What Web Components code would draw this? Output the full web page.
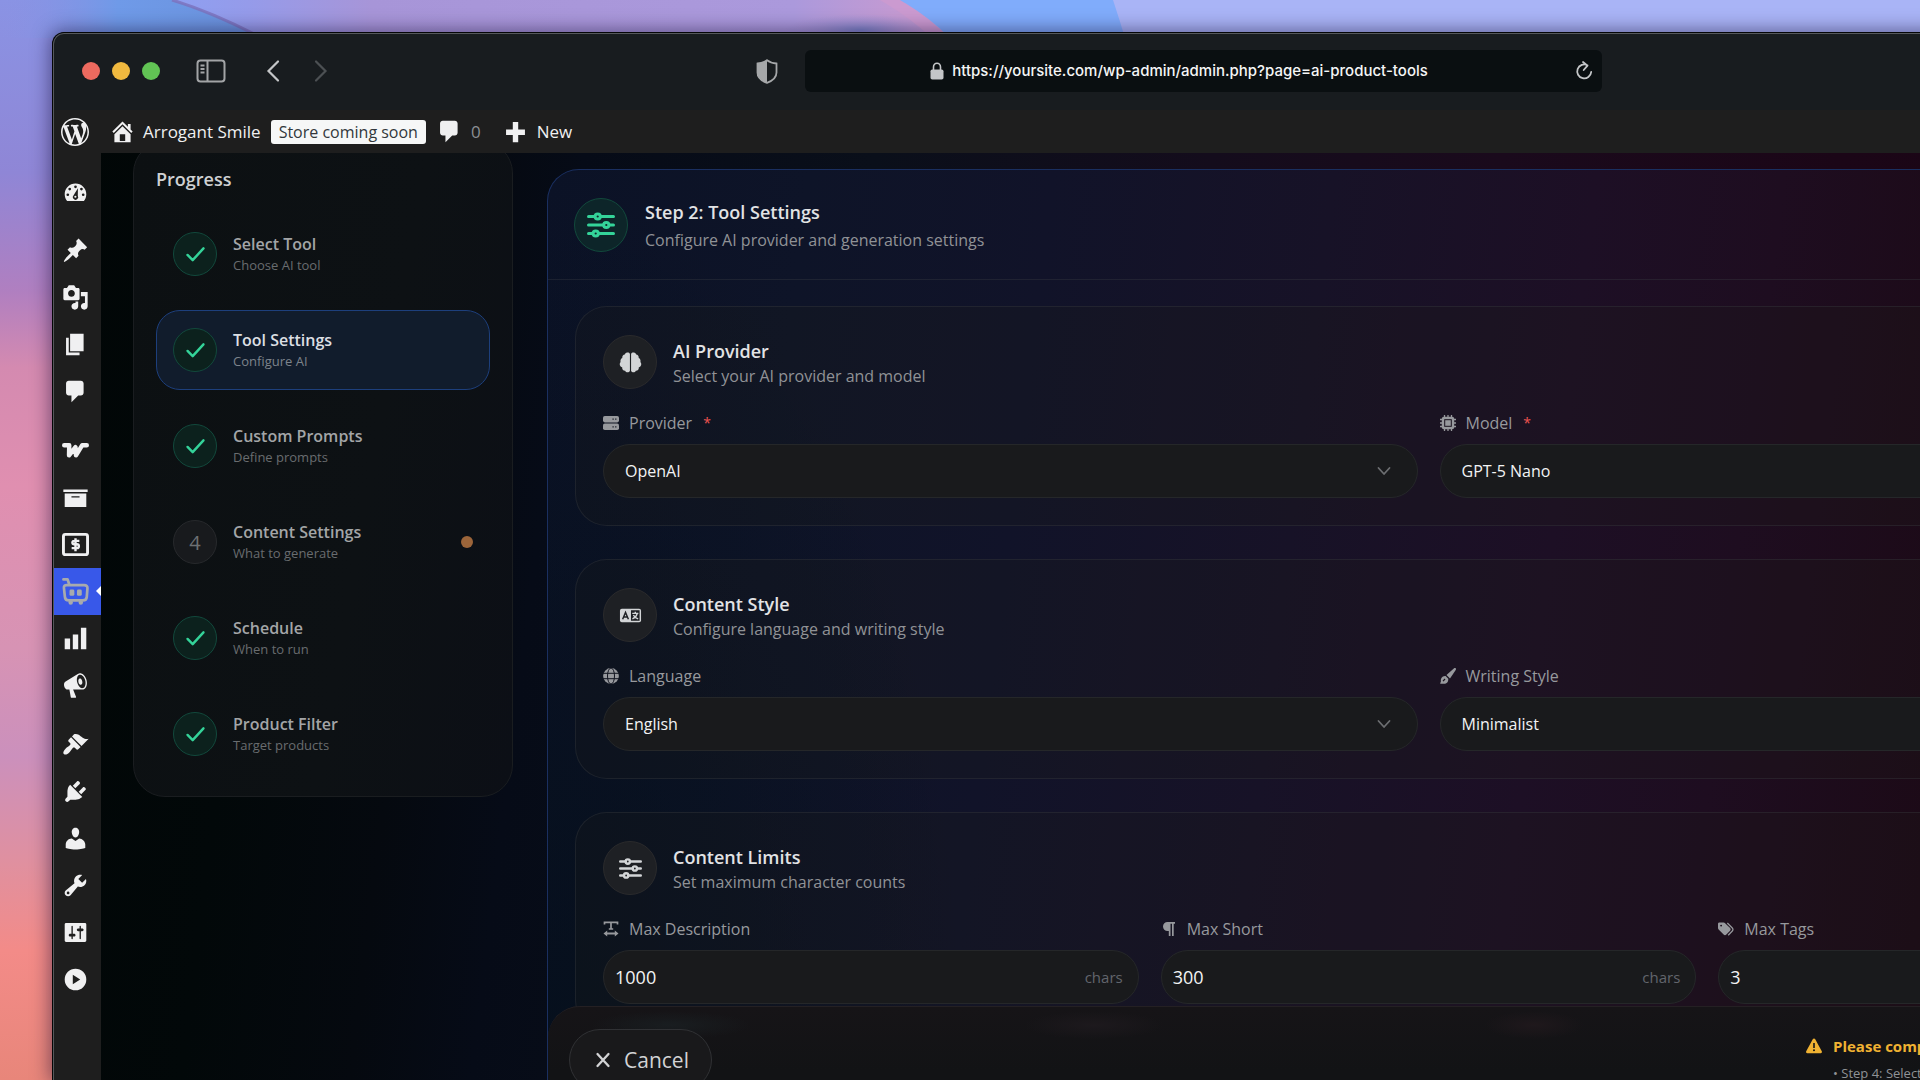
<!DOCTYPE html>
<html lang="en">
<head>
<meta charset="utf-8">
<title>AI Product Tools</title>
<style>
  html, body { margin: 0; height: 100%; }
  body { overflow: hidden; background: #a9b4f6; font-family: "Open Sans", "Noto Sans", sans-serif; }
</style>
</head>
<body>
<desk-top>
  <browser-window url="https://yoursite.com/wp-admin/admin.php?page=ai-product-tools">
    <admin-bar site="Arrogant Smile" badge="Store coming soon" comments="0"></admin-bar>
    <admin-shell>
      <admin-menu slot="menu"></admin-menu>
      <progress-card slot="aside" heading="Progress">
        <step-item heading="Select Tool" note="Choose AI tool" done></step-item>
        <step-item heading="Tool Settings" note="Configure AI" done active></step-item>
        <step-item heading="Custom Prompts" note="Define prompts" done></step-item>
        <step-item heading="Content Settings" note="What to generate" number="4" pending></step-item>
        <step-item heading="Schedule" note="When to run" done></step-item>
        <step-item heading="Product Filter" note="Target products" done></step-item>
      </progress-card>
      <step-panel heading="Step 2: Tool Settings" note="Configure AI provider and generation settings">
        <settings-section icon="brain" heading="AI Provider" note="Select your AI provider and model">
          <select-field icon="server" label="Provider" required value="OpenAI"></select-field>
          <select-field icon="chip" label="Model" required value="GPT-5 Nano"></select-field>
        </settings-section>
        <settings-section icon="language" heading="Content Style" note="Configure language and writing style">
          <select-field icon="globe" label="Language" value="English"></select-field>
          <select-field icon="brush" label="Writing Style" value="Minimalist"></select-field>
        </settings-section>
        <settings-section icon="sliders" heading="Content Limits" note="Set maximum character counts">
          <number-field icon="textwidth" label="Max Description" value="1000" unit="chars"></number-field>
          <number-field icon="paragraph" label="Max Short" value="300" unit="chars"></number-field>
          <number-field icon="tags" label="Max Tags" value="3"></number-field>
        </settings-section>
        <action-bar slot="actions"></action-bar>
      </step-panel>
    </admin-shell>
  </browser-window>
</desk-top>

<script>
const ICONS = {
  wordpress: ['0 0 20 20', '<path d="M20 10c0-5.51-4.49-10-10-10C4.48 0 0 4.49 0 10c0 5.52 4.48 10 10 10 5.51 0 10-4.48 10-10zM7.78 15.37L4.37 6.22c.55-.02 1.17-.08 1.17-.08.5-.06.44-1.13-.06-1.11 0 0-1.45.11-2.37.11-.18 0-.37 0-.58-.01C4.12 2.69 6.87 1.11 10 1.11c2.33 0 4.45.87 6.05 2.34-.68-.11-1.65.39-1.65 1.58 0 .74.45 1.36.9 2.1.35.61.55 1.36.55 2.46 0 1.49-1.4 5-1.4 5l-3.03-8.37c.54-.02.82-.17.82-.17.5-.05.44-1.25-.06-1.22 0 0-1.44.12-2.38.12-.87 0-2.33-.12-2.33-.12-.5-.03-.56 1.2-.06 1.22l.92.08 1.26 3.41zM17.41 10c.24-.64.74-1.87.43-4.25.7 1.29 1.05 2.71 1.05 4.25 0 3.29-1.73 6.24-4.4 7.78.97-2.59 1.94-5.2 2.92-7.78zM6.1 18.09C3.12 16.65 1.11 13.53 1.11 10c0-1.3.23-2.48.72-3.59C3.25 10.3 4.67 14.2 6.1 18.09zm4.03-6.63l2.58 6.98c-.86.29-1.76.45-2.71.45-.79 0-1.57-.11-2.29-.33.81-2.38 1.62-4.74 2.42-7.1z"/>'],
  home: ['0 0 20 20', '<path fill-rule="evenodd" d="M16 8.5l1.53 1.53-1.06 1.06L10 4.6l-6.47 6.49-1.06-1.06L10 2.5l4 4v-2h2v4zm-6-2.46l6 5.99V18H4v-5.97zM12 17v-5H8v5h4z"/>'],
  comment: ['0 0 20 20', '<path d="M5 2h9c1.1 0 2 .9 2 2v7c0 1.1-.9 2-2 2h-2l-5 5v-5H5c-1.1 0-2-.9-2-2V4c0-1.1.9-2 2-2z"/>'],
  plus: ['0 0 20 20', '<path d="M8 3h4v5.500h5v4h-5V18H8v-5.500H3v-4h5z"/>'],
  dashboard: ['0 0 20 20', '<path fill-rule="evenodd" d="M3.76 17h12.48c1.1-1.37 1.76-3.11 1.76-5 0-4.42-3.580-8-8-8s-8 3.580-8 8c0 1.890.66 3.630 1.760 5zM10 5.500a1 1 0 1 1 0 2 1 1 0 0 1 0-2zM5.700 7.200a1 1 0 1 1 0 2 1 1 0 0 1 0-2zM14.400 7.200a1 1 0 1 1 0 2 1 1 0 0 1 0-2zM4.300 11.400a1 1 0 1 1 0 2 1 1 0 0 1 0-2zM15.700 11.400a1 1 0 1 1 0 2 1 1 0 0 1 0-2zM11.800 7.600l-.1 5.500a2 2 0 1 1-3.100-.4z"/><circle cx="9.900" cy="13.900" r=".8"/>'],
  pin: ['0 0 20 20', '<path d="M10.44 3.02l1.82-1.82 6.36 6.35-1.83 1.82c-1.05-.68-2.48-.57-3.41.36l-.75.75c-.92.93-1.04 2.35-.35 3.41l-1.83 1.82-2.41-2.41-2.8 2.79c-.42.42-3.38 2.71-3.8 2.29s1.86-3.39 2.28-3.81l2.79-2.79L4.1 9.36l1.83-1.82c1.05.69 2.48.57 3.4-.36l.75-.75c.93-.92 1.05-2.35.36-3.41z"/>'],
  media: ['0 0 20 20', '<path d="M13 11V4c0-.55-.45-1-1-1h-1.67L9 1H5L3.67 3H2c-.55 0-1 .45-1 1v7c0 .55.45 1 1 1h10c.55 0 1-.45 1-1zM7 4.5c1.38 0 2.5 1.12 2.5 2.5S8.38 9.5 7 9.5 4.5 8.38 4.5 7 5.62 4.5 7 4.5zM14 6h5v10.5c0 1.38-1.12 2.5-2.5 2.5S14 17.88 14 16.5s1.12-2.5 2.5-2.5c.17 0 .34.02.5.05V9h-3V6zm-4 8.05V13h2v3.5c0 1.38-1.12 2.5-2.5 2.5S7 17.88 7 16.5 8.12 14 9.5 14c.17 0 .34.02.5.05z"/>'],
  pages: ['0 0 20 20', '<path d="M6 15V2h10v13H6zm-1 1h8v2H3V5h2v11z"/>'],
  woo: ['0 0 28 28', '<path d="M2.300 8.500h5.200L7.300 19l6.700-8.500.5 8.500 6.500-10.500h4.700" fill="none" stroke="currentColor" stroke-width="4.600" stroke-linejoin="round" stroke-linecap="round"/>'],
  archive: ['0 0 20 20', '<path fill-rule="evenodd" d="M19 4v2H1V4h18zM2 7h16v10H2V7zm11 3V9H7v1h6z"/>'],
  money: ['0 0 28 28', '<rect x="1.500" y="3.500" width="25" height="21" rx="2" fill="none" stroke="currentColor" stroke-width="3"/><path d="M18 10.200h-5.200c-1.500 0-2 .8-2 1.800s.7 1.800 2 1.800h2.700c1.300 0 2 .9 2 2s-.7 2-2 2H10M14 7.500V21" fill="none" stroke="currentColor" stroke-width="2.500"/>'],
  robot: ['0 0 28 28', '<g fill="none" stroke="currentColor" stroke-width="2.800" stroke-linejoin="round" stroke-linecap="round"><path d="M1.500 1.500h4.300l1.700 5"/><path d="M5 7.300h18c2.300 0 3.600 1.300 3.400 3.500l-.7 8.700c-.2 2.600-1.500 3.800-4 3.800H7c-2.500 0-3.800-1.200-4-3.800L2 10.300c-.2-2 .8-3 3-3z"/></g><rect x="7.800" y="12" width="5" height="6.500" rx="1.500"/><rect x="15.500" y="12" width="5" height="6.500" rx="1.500"/><circle cx="9" cy="25.500" r="2.300"/><circle cx="19.500" cy="25.500" r="2.300"/>'],
  bars: ['0 0 20 20', '<path d="M18 18V2h-4v16h4zm-6 0V7H8v11h4zm-6 0v-8H2v8h4z"/>'],
  megaphone: ['0 0 20 20', '<path fill-rule="evenodd" d="M18.15 5.94c.46 1.62.38 3.22-.02 4.48-.42 1.28-1.26 2.18-2.3 2.48-.16.06-.26.06-.4.06-.06.02-.12.02-.18.02-.06.02-.14.02-.22.02h-6.8l2.22 5.5c.02.14-.06.26-.14.34-.08.1-.24.16-.34.16H6.95c-.1 0-.26-.06-.34-.16-.08-.08-.16-.2-.14-.34l-1-5.5H4.25l-.02-.02c-.5.06-1.08-.18-1.54-.62s-.88-1.08-1.06-1.88c-.24-.8-.2-1.56-.02-2.2.18-.62.58-1.08 1.06-1.3l.02-.02 9-5.4c.1-.06.18-.1.24-.16.06-.04.14-.08.24-.12.16-.08.28-.12.5-.18 1.04-.3 2.24.1 3.22.98s1.84 2.24 2.26 3.86zm-2.58 5.98h-.02c.4-.1.74-.34 1.04-.7.58-.7.86-1.76.86-3.04 0-.64-.1-1.3-.28-1.98-.34-1.36-1.02-2.5-1.78-3.24s-1.68-1.1-2.46-.88c-.82.22-1.4.96-1.7 2-.32 1.04-.28 2.36.06 3.72.38 1.36 1 2.5 1.8 3.24.78.74 1.62 1.1 2.48.88zm-2.54-7.08c.22-.04.42-.02.62.04.38.16.76.48 1.02 1s.42 1.2.42 1.78c0 .3-.04.56-.12.8-.18.48-.44.84-.86.94-.34.1-.8-.06-1.14-.4s-.64-.86-.78-1.5c-.18-.62-.12-1.24.02-1.72s.48-.84.82-.94z"/>'],
  paint: ['0 0 20 20', '<path d="M14.48 11.06L7.41 3.99l1.5-1.5c.5-.56 2.3-.47 3.51.32 1.21.8 1.43 1.28 2.91 2.1 1.18.64 2.45 1.26 4.45.85zm-.71.71L6.7 4.7 4.93 6.47c-.39.39-.39 1.02 0 1.41l1.06 1.06c.39.39.39 1.03 0 1.42-.6.6-1.43 1.11-2.21 1.69-.35.26-.7.53-1.01.84C1.43 14.23.4 16.08 1.4 17.07c.99 1 2.84-.03 4.18-1.36.31-.31.58-.66.85-1.02.57-.78 1.08-1.61 1.69-2.21.39-.39 1.02-.39 1.41 0l1.06 1.06c.39.39 1.02.39 1.41 0z"/>'],
  plug: ['0 0 20 20', '<path d="M13.11 4.36L9.87 7.6 8 5.73l3.24-3.24c.35-.34 1.05-.2 1.56.32.52.51.66 1.21.31 1.55zm-8 1.77l.91-1.12 9.01 9.01-1.19.84c-.71.71-2.63 1.16-3.82 1.16H6.14L4.9 17.26c-.59.59-1.54.59-2.12 0-.59-.58-.59-1.53 0-2.12l1.24-1.24v-3.88c0-1.13.4-3.19 1.09-3.89zm7.26 3.97l3.24-3.24c.34-.35 1.04-.21 1.55.31.52.51.66 1.21.31 1.55l-3.24 3.25z"/>'],
  user: ['0 0 20 20', '<path d="M10 9.25c-2.27 0-2.73-3.44-2.73-3.44C7 4.02 7.82 2 9.97 2c2.16 0 2.98 2.02 2.71 3.81 0 0-.41 3.44-2.68 3.44zm0 2.57L12.72 10c2.39 0 4.52 2.33 4.52 4.53v2.49s-3.65 1.13-7.24 1.13c-3.65 0-7.24-1.13-7.24-1.13v-2.49c0-2.25 1.94-4.48 4.47-4.48z"/>'],
  wrench: ['0 0 20 20', '<path fill-rule="evenodd" d="M16.68 9.77c-1.34 1.34-3.3 1.67-4.95.99l-5.41 6.52c-.99.99-2.59.99-3.58 0s-.99-2.59 0-3.57l6.52-5.42c-.68-1.65-.35-3.61.99-4.95 1.28-1.28 3.12-1.62 4.72-1.06l-2.89 2.89 2.82 2.82 2.86-2.87c.53 1.58.18 3.39-1.08 4.65zM3.81 16.21c.4.39 1.04.39 1.43 0 .4-.4.4-1.04 0-1.43-.39-.4-1.03-.4-1.43 0-.39.39-.39 1.03 0 1.43z"/>'],
  settings: ['0 0 20 20', '<path fill-rule="evenodd" d="M18 16V4c0-.55-.45-1-1-1H3c-.55 0-1 .45-1 1v12c0 .55.45 1 1 1h14c.55 0 1-.45 1-1zM8 11h1c.55 0 1 .45 1 1s-.45 1-1 1H8v1.5c0 .28-.22.5-.5.5s-.5-.22-.5-.5V13H6c-.55 0-1-.45-1-1s.45-1 1-1h1V5.5c0-.28.22-.5.5-.5s.5.22.5.5V11zm5-2h-1c-.55 0-1-.45-1-1s.45-1 1-1h1V5.5c0-.28.22-.5.5-.5s.5.22.5.5V7h1c.55 0 1 .45 1 1s-.45 1-1 1h-1v5.5c0 .28-.22.5-.5.5s-.5-.22-.5-.5V9z"/>'],
  play: ['0 0 20 20', '<path fill-rule="evenodd" d="M10 2a8 8 0 1 1 0 16 8 8 0 0 1 0-16zM8 6.500v7l5.500-3.500z"/>'],
  sidebar: ['0 0 30 24', '<g fill="none" stroke="currentColor" stroke-width="2"><rect x="1.500" y="1.500" width="27" height="21" rx="3"/><path d="M11.500 1.500v21M4.500 6.500h4M4.500 10h4M4.500 13.500h4"/></g>'],
  back: ['0 0 14 22', '<path d="M12 1.500 2.500 11 12 20.500" fill="none" stroke="currentColor" stroke-width="2.200" stroke-linecap="round"/>'],
  forward: ['0 0 14 22', '<path d="M2 1.500 11.500 11 2 20.500" fill="none" stroke="currentColor" stroke-width="2.200" stroke-linecap="round"/>'],
  shield: ['0 0 22 25', '<path d="M11 1.200c2.500 2 6 3 9.500 3.300v9c0 5-4.500 8.500-9.500 10.300C6 22 1.500 18.500 1.500 13.500v-9C5 4.200 8.500 3.200 11 1.200z" fill="none" stroke="currentColor" stroke-width="1.800"/><path d="M11 1.200v22.600C6 22 1.500 18.500 1.500 13.500v-9C5 4.200 8.500 3.200 11 1.200z"/>'],
  lock: ['0 0 14 18', '<rect x=".5" y="7.500" width="13" height="10" rx="1.800"/><path d="M3.500 8V5a3.500 3.800 0 0 1 7 0v3" fill="none" stroke="currentColor" stroke-width="1.600"/>'],
  reload: ['0 0 18 20', '<path d="M12.500 4.200A7 7 0 1 0 16.200 11M8 1l4.500 3.600L8.700 9" fill="none" stroke="currentColor" stroke-width="1.800" stroke-linecap="round" stroke-linejoin="round"/>'],
  check: ['0 0 20 16', '<path d="M1.500 8.500 7 14 18.500 1.500" fill="none" stroke="currentColor" stroke-width="2.600" stroke-linecap="round" stroke-linejoin="round"/>'],
  sliders: ['0 0 28 26', '<g fill="none" stroke="currentColor" stroke-width="3" stroke-linecap="round"><path d="M1.500 4.500h6M14 4.500h12.500M1.500 13h14.500M22.500 13h4M1.500 21.500h4M12 21.500h14.500"/><circle cx="10.700" cy="4.500" r="2.600"/><circle cx="19.300" cy="13" r="2.600"/><circle cx="8.700" cy="21.500" r="2.600"/></g>'],
  brain: ['0 0 24 24', '<path d="M11.400 3v17.500c-.8 2.200-4 2.400-5 .1-2 .1-3.400-1.600-3-3.500C.6 16 0 13.300 1.600 11.400c-.4-2 .4-3.500 1.800-4.100C3.200 5.200 4.600 3.900 6 3.700 7 1.300 10.500 1 11.400 3zM12.600 3v17.500c.8 2.200 4 2.400 5 .1 2 .1 3.400-1.600 3-3.500 2.800-1.100 3.400-3.800 1.800-5.700.4-2-.4-3.500-1.800-4.100.2-2.100-1.200-3.400-2.600-3.600C17 1.300 13.500 1 12.600 3z"/>'],
  language: ['0 0 24 24', '<rect x="1" y="5" width="22" height="14" rx="2"/><rect x="12.500" y="6.500" width="9" height="11" fill="#1e2024"/><g fill="none" stroke="#1e2024" stroke-width="1.500"><path d="M3.800 16 6.800 8.800 9.800 16M5 13.500h3.600"/><path stroke="currentColor" d="M13.800 9.800h6.400M17 8v1.800M19 10c-.6 2.600-2.200 4.300-5 5.500M15 11.500c.8 1.800 2.400 3.200 5 4"/></g>'],
  server: ['0 0 16 16', '<rect y="1" width="16" height="6.400" rx="1.800"/><rect y="8.600" width="16" height="6.400" rx="1.800"/><path d="M9.500 4.200h1.200M12.200 4.200h1.200M9.500 11.800h1.200M12.200 11.800h1.200" stroke="#11151f" stroke-width="1.300"/>'],
  chip: ['0 0 16 16', '<path d="M4.500 0v16M8 0v16M11.500 0v16M0 4.500h16M0 8h16M0 11.500h16" stroke="currentColor" stroke-width="1.300"/><rect x="1.800" y="1.800" width="12.400" height="12.400" rx="2"/><rect x="4.700" y="4.700" width="6.600" height="6.600" fill="none" stroke="#1a121f" stroke-width="1"/>'],
  globe: ['0 0 16 16', '<circle cx="8" cy="8" r="7.900"/><g fill="none" stroke="#11141f" stroke-width="1"><ellipse cx="8" cy="8" rx="3.500" ry="8"/><path d="M0 5.300h16M0 10.700h16"/></g>'],
  brush: ['0 0 16 16', '<path d="M15.700.3c.5.500.4 1.200 0 1.800L10 10.500 6.500 7 13.800.5c.6-.5 1.400-.6 1.900-.2zM5.600 8l2.700 2.700c.2 3-1.500 5-4.300 5H.8c-.5 0-.8-.5-.4-1C1.500 13.600.4 12.500 1 11c.7-2 2.400-3.200 4.600-3z"/><path d="M3 13.200 5 11" stroke="#1b121d" stroke-width="1.200"/>'],
  textwidth: ['0 0 16 16', '<path d="M1.500 3.500V1.300h13v2.200M8 1.300v6.500M5.800 8h4.400" fill="none" stroke="currentColor" stroke-width="1.700"/><path d="M.5 12.500 4.200 9.500v2h7.600v-2l3.700 3-3.700 3v-2H4.200v2z"/>'],
  paragraph: ['0 0 16 16', '<path d="M6.500 1H14v1.800h-1.300V15H11V2.800H9.500V15H7.800v-5H6.500a4.500 4.500 0 0 1 0-9z"/>'],
  tags: ['0 0 18 16', '<path fill-rule="evenodd" d="M0 2.200v4.700c0 .6.200 1.200.7 1.600l5.600 5.800c.9.900 2.200.9 3.100 0l4.200-4.300c.9-.9.900-2.200 0-3.100L8 1.400C7.600.900 7 .7 6.400.7H1.500C.7.700 0 1.400 0 2.200zM3.500 5.300a1.100 1.100 0 1 1 0-2.200 1.100 1.100 0 0 1 0 2.200z"/><path d="M10.500 1.200l5.600 5.700c1 1 1 2.300 0 3.300l-4.600 4.800" fill="none" stroke="currentColor" stroke-width="1.400"/>'],
  chevron: ['0 0 14 10', '<path d="M1.500 2 7 8l5.500-6" fill="none" stroke="currentColor" stroke-width="1.800" stroke-linecap="round" stroke-linejoin="round"/>'],
  close: ['0 0 14 14', '<path d="M1.500 1 12.500 13M12.500 1 1.500 13" stroke="currentColor" stroke-width="2.300" stroke-linecap="round"/>'],
  warning: ['0 0 16 16', '<path fill-rule="evenodd" d="M8 .5c.5 0 .9.200 1.100.6l6.700 12.200c.5.900-.1 1.900-1.100 1.900H1.300c-1 0-1.600-1-1.100-1.900L6.900 1.100C7.100.700 7.500.5 8 .5zM7.200 5v5h1.600V5zM8 11.300a1 1 0 1 0 0 2 1 1 0 0 0 0-2z"/>']
};

class Base extends HTMLElement {
  connectedCallback() {
    if (this.shadowRoot) return;
    const t = document.createElement('template');
    t.innerHTML = this.view();
    this.attachShadow({ mode: 'open' }).append(t.content.cloneNode(true));
  }
  a(name) { return this.getAttribute(name) || ''; }
}

customElements.define('ui-icon', class extends Base {
  view() {
    const [box, art] = ICONS[this.a('name')];
    return `<style>:host{display:inline-flex;width:16px;height:16px;flex:none}svg{width:100%;height:100%;overflow:visible}</style>
      <svg viewBox="${box}" fill="currentColor" aria-hidden="true">${art}</svg>`;
  }
});

customElements.define('desk-top', class extends Base {
  view() {
    return `<style>
      :host{display:block;position:relative;height:100vh;overflow:hidden}
      .paper{position:absolute;inset:0;width:100%;height:100%}
      .body{position:relative;height:100%;box-sizing:border-box;padding:32px 0 0 52px}
    </style>
    <svg class="paper" viewBox="0 0 1920 1080" preserveAspectRatio="none" aria-hidden="true">
      <defs>
        <linearGradient id="side" x1="0" y1="0" x2="0" y2="1">
          <stop offset="0" stop-color="#8a93e4"/><stop offset=".16" stop-color="#8f86d6"/>
          <stop offset=".27" stop-color="#b07fc0"/><stop offset=".34" stop-color="#d48ab0"/>
          <stop offset=".45" stop-color="#e08fb0"/><stop offset=".6" stop-color="#d793b4"/>
          <stop offset=".7" stop-color="#cb90bc"/><stop offset=".8" stop-color="#e0909f"/>
          <stop offset=".88" stop-color="#f38b88"/><stop offset="1" stop-color="#e8867a"/>
        </linearGradient>
        <linearGradient id="top" x1="160" x2="1920" y1="0" y2="0" gradientUnits="userSpaceOnUse">
          <stop offset="0" stop-color="#8da0f2"/><stop offset=".05" stop-color="#959bea"/>
          <stop offset=".12" stop-color="#a795d8"/><stop offset=".36" stop-color="#ab99dc"/>
          <stop offset=".42" stop-color="#c49ad2"/>
        </linearGradient>
        <linearGradient id="blue" x1="0" x2="1" y1="0" y2="0">
          <stop offset="0" stop-color="#8a93e4" stop-opacity="0"/><stop offset=".45" stop-color="#6f9ae8"/><stop offset="1" stop-color="#6a92dc"/>
        </linearGradient>
        <radialGradient id="dusk"><stop offset="0" stop-color="#7f86cc"/><stop offset="1" stop-color="#9a90d2" stop-opacity="0"/></radialGradient>
      </defs>
      <rect width="1920" height="1080" fill="#a9b4f6"/>
      <rect width="300" height="1080" fill="url(#side)"/>
      <path d="M170 0H910L950 40H260z" fill="url(#top)"/>
      <path d="M0 0h172q40 12 90 38H0z" fill="url(#blue)"/>
      <path d="M172 0q40 12 90 38" fill="none" stroke="#7c70bc" stroke-width="3" opacity=".8"/>
      <ellipse cx="860" cy="30" rx="75" ry="16" fill="url(#dusk)"/>
      <path d="M880 0h20q28 16 50 38h-18q-24-22-52-38z" fill="#cb9ad0"/>
      <path d="M900 0h213q6 18 12 38H950q-22-22-50-38z" fill="#80acfb"/>
    </svg>
    <div class="body"><slot></slot></div>`;
  }
});

customElements.define('browser-window', class extends Base {
  view() {
    return `<style>
      :host{display:flex;flex-direction:column;height:100%;margin-right:-434px;box-sizing:border-box;overflow:hidden;
        border:1px solid #050607;border-bottom:0;border-radius:12px 12px 0 0;background:#181c1f;
        box-shadow:0 0 18px 2px rgba(20,10,50,.5)}
      .frame{display:flex;flex-direction:column;flex:1;min-height:0;border:1px solid #55585b;border-bottom:0;border-right:0;border-radius:11px 11px 0 0;overflow:hidden}
      header{display:grid;grid-template-columns:1fr 797px 1fr;align-items:center;height:76px;flex:none;color:#c4c6c8;padding-bottom:2px;box-sizing:border-box}
      .left{display:flex;align-items:center;padding-left:28px}
      .lights{display:flex;gap:12px;margin-right:36px}
      .lights i{width:18px;height:18px;border-radius:50%}
      button{all:unset;display:inline-flex;cursor:pointer}
      .side{width:30px;height:24px;margin-right:40px;color:#a2a4a6}
      .back{margin-right:34px}
      .nav{width:14px;height:22px}
      .fwd{color:#4c5053}
      .shield{width:22px;height:25px;margin-left:auto;margin-right:27px;color:#a5a7a9}
      .url{display:flex;align-items:center;height:42px;border-radius:6px;background:#0a0f11;box-sizing:border-box;padding-right:9px}
      label{display:flex;align-items:center;justify-content:center;flex:1;gap:8px;padding-right:22px}
      .lock{width:14px;height:18px}
      input{all:unset;field-sizing:content;font:500 15px/24px Inter,sans-serif;color:#f5f6f6}
      .reload{width:18px;height:20px}
      .page{flex:1;min-height:0;display:flex;flex-direction:column}
    </style>
    <div class="frame">
      <header>
        <div class="left">
          <span class="lights"><i style="background:#ed6a5f"></i><i style="background:#f0b93f"></i><i style="background:#61c454"></i></span>
          <button aria-label="Show sidebar"><ui-icon class="side" name="sidebar"></ui-icon></button>
          <button class="back" aria-label="Back"><ui-icon class="nav" name="back"></ui-icon></button>
          <button aria-label="Forward"><ui-icon class="nav fwd" name="forward"></ui-icon></button>
          <ui-icon class="shield" name="shield"></ui-icon>
        </div>
        <div class="url">
          <label><ui-icon class="lock" name="lock"></ui-icon><input aria-label="Address" value="${this.a('url')}"></label>
          <button aria-label="Reload"><ui-icon class="reload" name="reload"></ui-icon></button>
        </div>
        <span></span>
      </header>
      <div class="page"><slot></slot></div>
    </div>`;
  }
});

customElements.define('admin-bar', class extends Base {
  view() {
    return `<style>
      :host{display:flex;align-items:center;height:43px;flex:none;background:#1e1e1e;color:#f0f0f1;padding-left:7px;font-size:17px;line-height:24px}
      a{display:flex;align-items:center;color:inherit;text-decoration:none;white-space:nowrap}
      .wp{width:28px;height:28px;margin-right:20px}
      .i{width:27px;height:27px}
      .home{gap:7px;margin-right:10px}
      .badge{background:#f6f7f7;color:#32373c;border-radius:3px;padding:0 8px;margin-right:10px;font-size:16px}
      .com{gap:8px;margin-right:21px;color:#8c8f94}
      .com .i{color:#f0f0f1}
      .new{gap:8px}
    </style>
    <a href="#" aria-label="About WordPress"><ui-icon class="wp" name="wordpress"></ui-icon></a>
    <a href="#" class="home"><ui-icon class="i" name="home"></ui-icon>${this.a('site')}</a>
    <a href="#" class="badge">${this.a('badge')}</a>
    <a href="#" class="com"><ui-icon class="i" name="comment"></ui-icon>${this.a('comments')}</a>
    <a href="#" class="new"><ui-icon class="i" name="plus"></ui-icon>New</a>`;
  }
});

customElements.define('admin-shell', class extends Base {
  view() {
    return `<style>
      :host{display:flex;flex:1;min-height:0;overflow:hidden;
        background:linear-gradient(97deg,#010606 0,#020809 10%,#05090f 17%,#060b17 22%,#0a0f1a 34%,#140c1c 48%,#1a0a1c 60%,#1b0617 74%,#1a0410 100%)}
      .aside{width:380px;flex:none;margin:-12px 34px 0 32px}
      main{flex:1;min-width:0;padding:16px 43px 0 0;display:flex;flex-direction:column}
    </style>
    <slot name="menu"></slot><div class="aside"><slot name="aside"></slot></div><main><slot></slot></main>`;
  }
});

customElements.define('admin-menu', class extends Base {
  view() {
    const groups = [
      [['dashboard', 'Dashboard']],
      [['pin', 'Posts'], ['media', 'Media'], ['pages', 'Pages'], ['comment', 'Comments']],
      [['woo', 'WooCommerce'], ['archive', 'Products'], ['money', 'Payments'], ['robot', 'AI Product Tools', 1], ['bars', 'Analytics'], ['megaphone', 'Marketing']],
      [['paint', 'Appearance'], ['plug', 'Plugins'], ['user', 'Users'], ['wrench', 'Tools'], ['settings', 'Settings'], ['play', 'Collapse menu']]
    ];
    return `<style>
      :host{display:flex;flex-direction:column;width:47px;flex:none;gap:12px;padding-top:15px;background:#1e1e1e;color:#f0f0f1}
      a{display:flex;align-items:center;box-sizing:border-box;padding-left:8px;height:47px;color:inherit;position:relative}
      ui-icon{width:27px;height:27px}
      .on{background:#3858e9;color:#a7aaad}
      .on::after{content:"";position:absolute;right:0;top:18px;border:5px solid transparent;border-right-color:#fff;border-left:0}
    </style>` + groups.map(g => `<nav>${g.map(([n, t, on]) => `<a href="#" aria-label="${t}"${on ? ' class="on"' : ''}><ui-icon name="${n}"></ui-icon></a>`).join('')}</nav>`).join('');
  }
});

customElements.define('progress-card', class extends Base {
  view() {
    return `<style>
      :host{display:block;box-sizing:border-box;border:1px solid #1a1d20;border-radius:32px;padding:24px 22px 22px;background:linear-gradient(100deg,#0c1012,#0d1114 60%,#0c0f16)}
      h2{margin:0 0 22px;font-size:18px;line-height:26px;font-weight:600;color:#cfd1d3}
      .list{display:flex;flex-direction:column;gap:16px}
    </style>
    <h2>${this.a('heading')}</h2><div class="list"><slot></slot></div>`;
  }
});

customElements.define('step-item', class extends Base {
  view() {
    return `<style>
      :host{display:flex;align-items:center;height:80px;box-sizing:border-box;border:1px solid transparent;border-radius:24px;padding:0 16px}
      :host([active]){background:#111c2c;border-color:#1d3f7c}
      .dot{display:flex;align-items:center;justify-content:center;box-sizing:border-box;width:44px;height:44px;border-radius:50%;border:1px solid #27292c;background:#181a1d;color:#6d7073;font-size:20px;margin-right:16px}
      :host([done]) .dot{background:#0c211d;border-color:#12493c;color:#34d399}
      ui-icon{width:19px;height:15px}
      .text{display:flex;flex-direction:column;flex:1}
      b{font-size:16px;line-height:22px;font-weight:600;color:#a3a5a7}
      small{font-size:13px;line-height:20px;color:#696c6f}
      :host([active]) b{color:#dcdfe3}
      :host([active]) small{color:#7d838b}
      .flag{width:12px;height:12px;border-radius:50%;background:#9c653a}
    </style>
    <span class="dot">${this.hasAttribute('done') ? '<ui-icon name="check"></ui-icon>' : this.a('number')}</span>
    <span class="text"><b>${this.a('heading')}</b><small>${this.a('note')}</small></span>
    ${this.hasAttribute('pending') ? '<i class="flag"></i>' : ''}`;
  }
});

customElements.define('step-panel', class extends Base {
  view() {
    return `<style>
      :host{display:flex;flex-direction:column;flex:1;min-height:0;position:relative;box-sizing:border-box;border:1px solid #1a2f60;border-bottom:0;border-radius:32px 32px 0 0;
        background:radial-gradient(ellipse 420px 900px at 0 100%,rgba(3,14,24,.7),transparent),
          linear-gradient(97deg,#0b1226 0,#0e1428 14%,#111329 27%,#171227 42%,#1d0f25 56%,#1e0d20 66%,#1c0a17 78%,#1a0710 100%)}
      header{display:flex;align-items:center;gap:17px;height:110px;flex:none;box-sizing:border-box;padding:0 26px;border-bottom:1px solid rgba(60,64,70,.35)}
      .disc{display:flex;align-items:center;justify-content:center;box-sizing:border-box;width:54px;height:54px;border-radius:50%;border:1px solid #12493c;background:#0d2529;color:#34d399}
      ui-icon{width:28px;height:26px}
      header div{padding-top:2px}
      h1{margin:0;font-size:18px;line-height:28px;font-weight:600;color:#e2e3e5}
      p{margin:0;font-size:16px;line-height:28px;color:#909296}
      .body{display:flex;flex-direction:column;gap:33px;padding:26px 27px 0}
    </style>
    <header><span class="disc"><ui-icon name="sliders"></ui-icon></span><div><h1>${this.a('heading')}</h1><p>${this.a('note')}</p></div></header>
    <div class="body"><slot></slot></div>
    <slot name="actions"></slot>`;
  }
});

customElements.define('settings-section', class extends Base {
  view() {
    return `<style>
      :host{display:block;box-sizing:border-box;border:1px solid rgba(60,64,68,.35);border-radius:32px;padding:28px 27px 27px;background:rgba(28,30,26,.24)}
      header{display:flex;align-items:center;gap:16px;margin-bottom:23px}
      .disc{display:flex;align-items:center;justify-content:center;box-sizing:border-box;width:54px;height:54px;border-radius:50%;border:1px solid #2a2a2c;background:#1e2024;color:#d3d5d7}
      ui-icon{width:23px;height:23px}
      header div{padding-top:2px}
      h2{margin:0;font-size:18px;line-height:26px;font-weight:600;color:#e2e3e5}
      p{margin:0;font-size:16px;line-height:25px;color:#909296}
      .row{display:grid;grid-auto-flow:column;grid-auto-columns:1fr;gap:22px}
    </style>
    <header><span class="disc"><ui-icon name="${this.a('icon')}"></ui-icon></span><div><h2>${this.a('heading')}</h2><p>${this.a('note')}</p></div></header>
    <div class="row"><slot></slot></div>`;
  }
});

const FIELD = `
  :host{display:flex;flex-direction:column;gap:10px}
  label{display:flex;align-items:center;gap:10px;font-size:16px;line-height:22px;color:#97999d}
  label em{font-style:normal;font-size:14px;color:#ef5350;margin-left:1px}
  .box{display:flex;align-items:center;box-sizing:border-box;height:54px;border:1px solid #252729;border-radius:27px;background:#191a1c}`;

customElements.define('select-field', class extends Base {
  view() {
    return `<style>${FIELD}
      .box{display:grid}
      select{all:unset;grid-area:1/1;box-sizing:border-box;width:100%;padding:0 60px 0 21px;font-size:16px;line-height:52px;color:#f2f3f4}
      .mark{grid-area:1/1;justify-self:end;align-self:center;width:14px;height:10px;margin-right:26px;color:#6c6e71;pointer-events:none}
    </style>
    <label for="f"><ui-icon name="${this.a('icon')}"></ui-icon>${this.a('label')}${this.hasAttribute('required') ? '<em>*</em>' : ''}</label>
    <div class="box"><select id="f"><option>${this.a('value')}</option></select><ui-icon class="mark" name="chevron"></ui-icon></div>`;
  }
});

customElements.define('number-field', class extends Base {
  view() {
    const unit = this.a('unit');
    return `<style>${FIELD}
      input{all:unset;flex:1;min-width:0;padding-left:11px;font-size:18px;line-height:52px;color:#f2f3f4}
      span{font-size:15px;color:#62656c;margin-right:15px}
    </style>
    <label for="f"><ui-icon name="${this.a('icon')}"></ui-icon>${this.a('label')}</label>
    <div class="box"><input id="f" inputmode="numeric" value="${this.a('value')}">${unit ? `<span>${unit}</span>` : ''}</div>`;
  }
});

customElements.define('action-bar', class extends Base {
  view() {
    return `<style>
      :host{display:flex;align-items:flex-start;justify-content:space-between;position:absolute;left:0;right:0;bottom:-34px;height:108px;box-sizing:border-box;
        padding:22px 21px;border-top:1px solid #242023;border-radius:32px 32px 0 0;
        background:radial-gradient(ellipse 80px 14px at 7% 18px,#191d20,transparent),radial-gradient(ellipse 70px 14px at 31% 18px,#1d191d,transparent),radial-gradient(ellipse 50px 14px at 56% 18px,#1f181c,transparent),linear-gradient(180deg,#161417,#121315 60%)}
      button{all:unset;box-sizing:border-box;display:flex;align-items:center;gap:14px;height:62px;padding:0 22px 0 26px;border:1px solid #303134;border-radius:31px;background:#19191b;color:#d2d3d5;font-size:21px;cursor:pointer}
      .x{width:14px;height:14px}
      .note{display:grid;grid-template-columns:16px 1fr;column-gap:11px;align-items:center;width:482px;padding-top:4px;color:#f0b232}
      b{font-size:15px;line-height:26px;font-weight:700}
      ul{grid-column:2;margin:0;padding:0;list-style:none;font-size:13px;line-height:29px;color:#909296}
    </style>
    <button><ui-icon class="x" name="close"></ui-icon>Cancel</button>
    <div class="note"><ui-icon name="warning"></ui-icon><b>Please complete</b><ul><li>• Step 4: Select</li></ul></div>`;
  }
});
</script>
</body>
</html>
